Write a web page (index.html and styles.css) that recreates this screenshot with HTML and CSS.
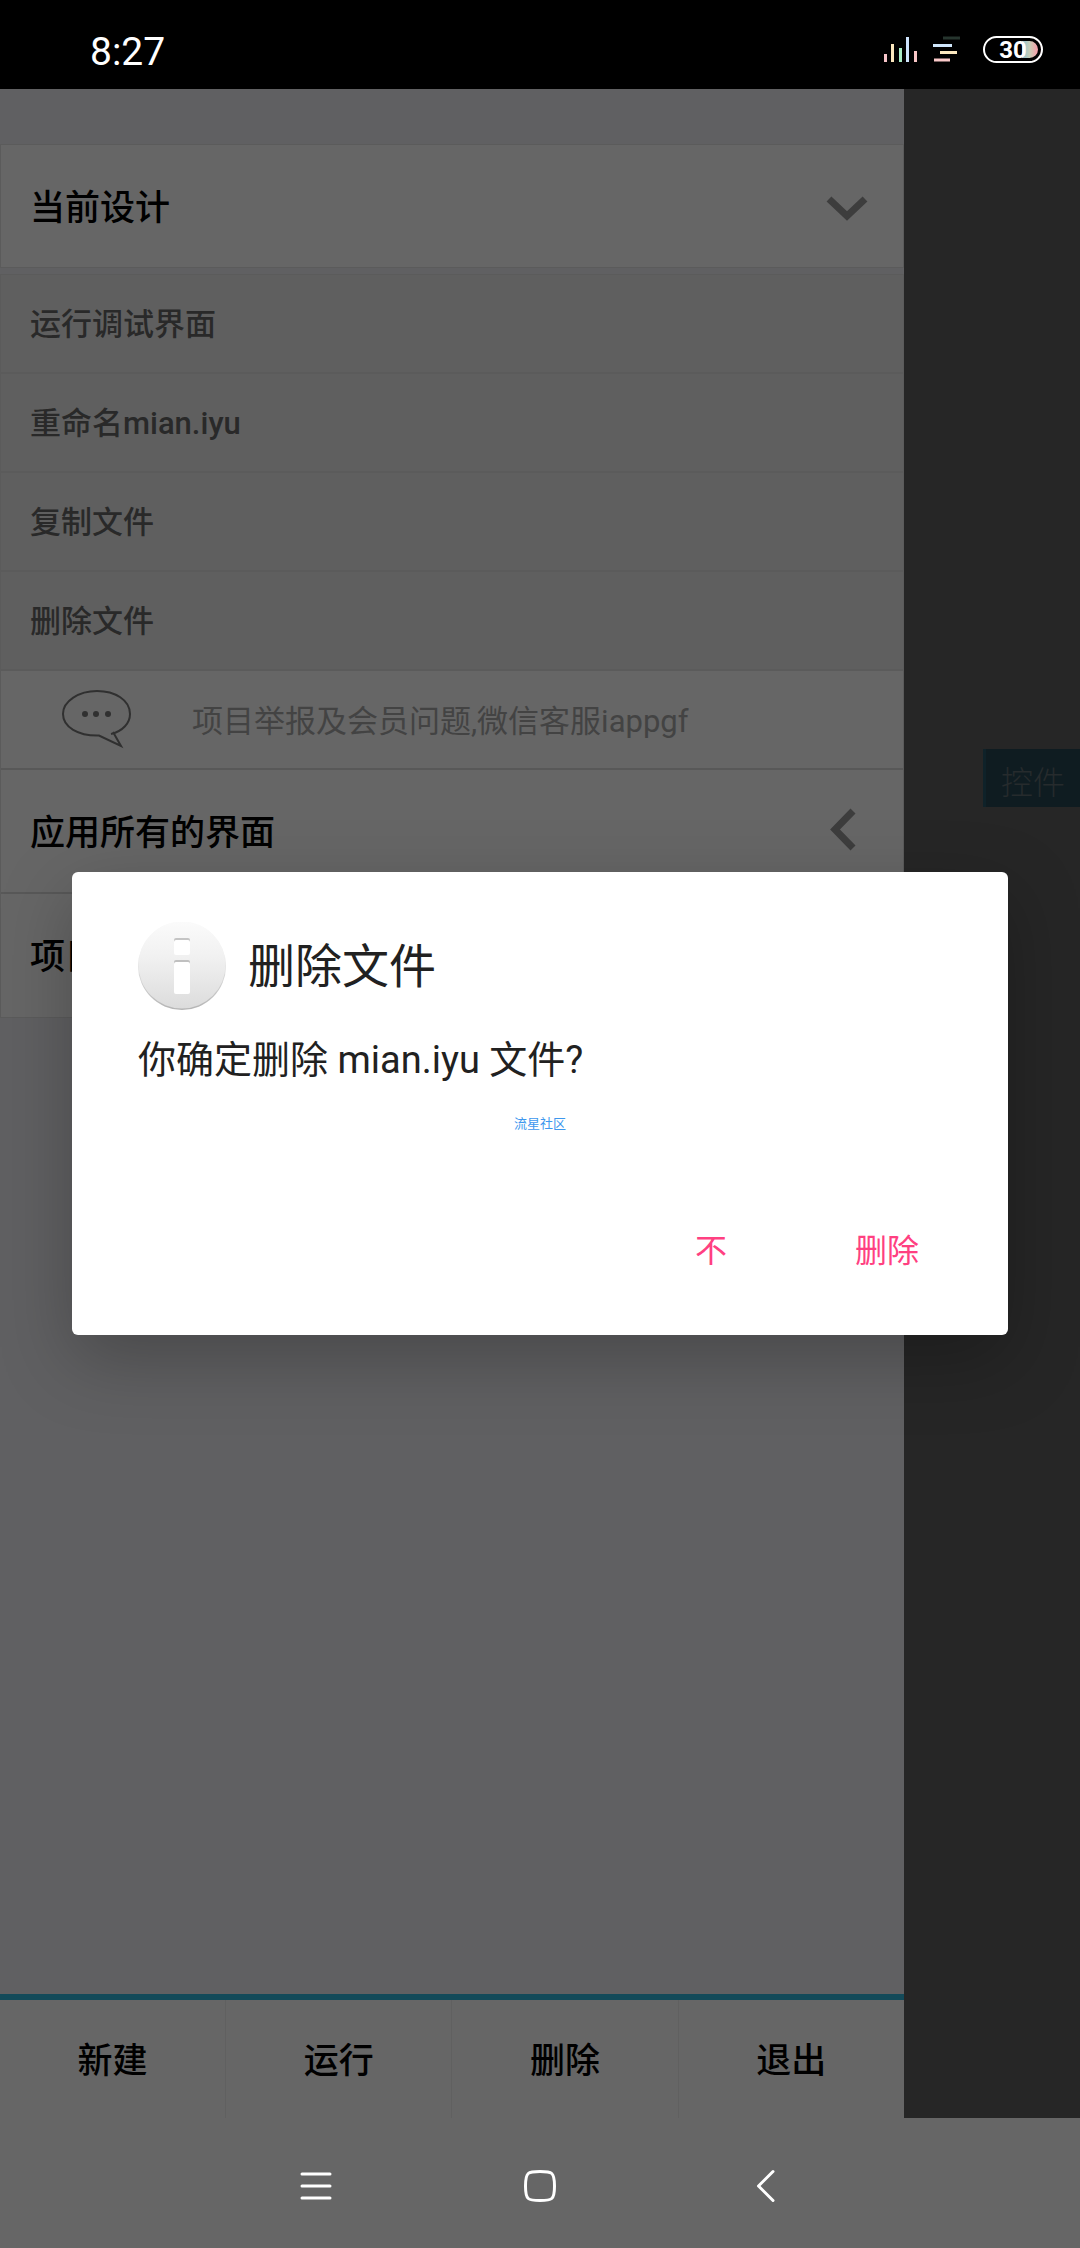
FILE: index.html
```html
<!DOCTYPE html>
<html lang="zh-CN">

<head>
    <meta charset="UTF-8">
    <meta name="viewport" content="width=device-width, initial-scale=1.0">
    <title>删除文件</title>
    <link rel="stylesheet" href="styles.css">
</head>

<body>
    <header class="status">
        <span class="time">8:27</span>
        <div class="status-icons">
            <svg width="34" height="28" viewBox="0 0 34 28">
                <rect x="1" y="18" width="3" height="8" fill="#f7c4c9" />
                <rect x="8" y="8" width="3" height="18" fill="#fbe7bd" />
                <rect x="16" y="12" width="3" height="14" fill="#a9ecc6" />
                <rect x="23" y="1" width="3" height="25" fill="#cfe4fd" />
                <rect x="31" y="15" width="3" height="11" fill="#f9c6c6" />
            </svg>
            <svg width="28" height="28" viewBox="0 0 28 28" stroke-width="3">
                <path d="M10 2h17" stroke="#26352e" />
                <path d="M0 9.500h19" stroke="#cfe6fb" />
                <path d="M7 16.500h17" stroke="#fbe8bf" />
                <path d="M1 24h16" stroke="#fac9c9" />
            </svg>
            <div class="battery">30</div>
        </div>
    </header>

    <main class="screen">
        <div class="drawer">
            <nav class="card">
                <button class="section">
                    当前设计
                    <svg width="44" height="44" viewBox="0 0 44 44">
                        <path d="M4 17l18 17 18-17" fill="none" stroke="#3d3d3d" stroke-width="7" />
                    </svg>
                </button>
            </nav>
            <nav class="card list">
                <button class="item">运行调试界面</button>
                <button class="item">重命名mian.iyu</button>
                <button class="item">复制文件</button>
                <button class="item">删除文件</button>
                <button class="contact">
                    <svg width="72" height="60" viewBox="0 0 72 60">
                        <path d="M50 45C62 42 69 34 69 25 69 11 54 2 36 2S2 12 2 25s15 22 36 21.500L60 57 52 43"
                            fill="none" stroke="#303030" stroke-width="2" />
                        <g fill="#303030">
                            <circle cx="24" cy="25" r="3" />
                            <circle cx="35" cy="25" r="3" />
                            <circle cx="47" cy="25" r="3" />
                        </g>
                    </svg>
                    项目举报及会员问题,微信客服iappgf
                </button>
                <button class="section">
                    应用所有的界面
                    <svg width="44" height="44" viewBox="0 0 44 44">
                        <path d="M28 4L10 22.500 28 41" fill="none" stroke="#3d3d3d" stroke-width="7" />
                    </svg>
                </button>
                <button class="section">项目</button>
            </nav>

            <div class="toolbar">
                <button>新建</button>
                <button>运行</button>
                <button>删除</button>
                <button>退出</button>
            </div>
        </div>

        <div class="stage">
            <button class="widgets">控件</button>
        </div>

        <div class="overlay">
            <div class="dialog" role="dialog" aria-labelledby="dialogTitle">
                <div class="dialog-head">
                    <svg width="88" height="88" viewBox="0 0 88 88">
                        <defs>
                            <linearGradient id="disc" x1="0" y1="0" x2="0" y2="1">
                                <stop offset="0" stop-color="#fbfbfb" />
                                <stop offset="0.4" stop-color="#f1f1f1" />
                                <stop offset="1" stop-color="#dcdcdc" />
                            </linearGradient>
                            <linearGradient id="rim" x1="0" y1="0" x2="0" y2="1">
                                <stop offset="0.3" stop-color="#f4f4f4" />
                                <stop offset="1" stop-color="#b4b4b4" />
                            </linearGradient>
                        </defs>
                        <circle cx="44" cy="44" r="44" fill="url(#rim)" />
                        <circle cx="44" cy="43" r="43.500" fill="url(#disc)" />
                        <rect x="36" y="16" width="16" height="8" rx="2" fill="#c4c4c4" />
                        <rect x="36" y="18" width="16" height="15" rx="2" fill="#fff" />
                        <rect x="36" y="38" width="16" height="8" rx="2" fill="#c0c0c0" />
                        <rect x="36" y="40" width="16" height="32" rx="2" fill="#fff" />
                    </svg>
                    <h1 id="dialogTitle">删除文件</h1>
                </div>
                <p class="message">你确定删除 mian.iyu 文件?</p>
                <p class="credit">流星社区</p>
                <div class="actions">
                    <button>不</button>
                    <button>删除</button>
                </div>
            </div>
        </div>
    </main>

    <footer class="navbar">
        <button aria-label="菜单">
            <svg width="36" height="36" viewBox="0 0 36 36">
                <path d="M6 6h28M6 18h28M6 30h28" />
            </svg>
        </button>
        <button aria-label="主页">
            <svg width="36" height="36" viewBox="0 0 36 36">
                <path d="M18 3.500C30 3.500 32.500 4 32.500 18S30 32.500 18 32.500 3.500 32 3.500 18 6 3.500 18 3.500z" />
            </svg>
        </button>
        <button aria-label="返回">
            <svg width="36" height="36" viewBox="0 0 36 36">
                <path d="M25 3.500L10.500 18 25 32.500" />
            </svg>
        </button>
    </footer>
</body>

</html>
```
FILE: styles.css
```css
* {
    box-sizing: border-box;
}

body {
    font-family: Roboto, "Noto Sans CJK SC", sans-serif;
    background-color: #666;
    margin: 0;
    min-height: 100vh;
    display: flex;
    flex-direction: column;
}

button {
    font-family: inherit;
    background: none;
    border: none;
    padding: 0;
    margin: 0;
    cursor: pointer;
}

svg {
    display: block;
    flex: none;
}

.status {
    height: 89px;
    padding: 14px 37px 0 90px;
    display: flex;
    align-items: center;
    justify-content: space-between;
    background-color: #000;
    color: #fff;
}

.time {
    font-size: 39px;
    line-height: 48px;
}

.status-icons {
    display: flex;
    align-items: center;
    gap: 20px;
    padding-bottom: 4px;
}

.status-icons svg:first-child {
    margin-right: -4px;
}

.battery {
    width: 60px;
    height: 27px;
    margin-left: 2px;
    border: 2px solid #fff;
    border-radius: 14px;
    background: linear-gradient(to right, #000 66%, #8fc4d4 67%, #c9cdb5 80%, #f2a3ab 92%) padding-box;
    box-shadow: inset 0 0 0 3px #000;
    font-size: 24px;
    font-weight: 700;
    line-height: 24px;
    text-align: center;
}

.screen {
    flex: 1;
    display: flex;
    position: relative;
}

.drawer {
    width: 83.7%;
    padding-top: 55px;
    display: flex;
    flex-direction: column;
    background-color: #606062;
}

.card {
    display: flex;
    flex-direction: column;
    background-color: #666;
    border: 1px solid #5b5b5b;
}

.list {
    margin-top: 6px;
}

.section {
    height: 122px;
    padding: 0 34px 4px 29px;
    display: flex;
    align-items: center;
    justify-content: space-between;
    font-size: 35px;
    font-weight: 500;
    color: #000;
}

.item {
    height: 99px;
    padding: 0 29px 4px;
    background-color: #5f5f5f;
    border-bottom: 2px solid #5b5b5b;
    font-size: 31px;
    font-weight: 500;
    text-align: left;
    color: #292929;
}

.contact {
    height: 99px;
    padding: 0 60px 2px;
    display: flex;
    align-items: center;
    gap: 59px;
    border-bottom: 2px solid #585858;
    font-size: 31px;
    color: #434343;
}

.list .section {
    height: 124px;
}

.list .section:not(:last-child) {
    border-bottom: 2px solid #585858;
}

.list .section:last-child {
    height: 123px;
}

.toolbar {
    margin-top: auto;
    height: 124px;
    display: flex;
    background-color: #666;
    border-top: 6px solid #134a59;
}

.toolbar button {
    flex: 1;
    padding-bottom: 4px;
    font-size: 35px;
    font-weight: 500;
    color: #000;
}

.toolbar button + button {
    border-left: 1px solid #606060;
}

.stage {
    flex: 1;
    display: flex;
    flex-direction: column;
    align-items: flex-end;
    padding-top: 660px;
    background-color: #262626;
}

.widgets {
    width: 97px;
    height: 58px;
    padding-top: 10px;
    background-color: #0f1c21;
    border-left: 3px solid #0f2229;
    font-size: 32px;
    font-weight: 300;
    line-height: 48px;
    color: #262b2d;
}

.overlay {
    position: absolute;
    inset: 0;
    display: flex;
    align-items: center;
    justify-content: center;
    padding: 0 72px;
}

.dialog {
    flex: 1;
    padding: 50px 33px 39px 66px;
    background-color: #fff;
    border-radius: 6px;
    box-shadow: 0 24px 72px rgba(0, 0, 0, 0.25);
    color: #212121;
}

.dialog-head {
    display: flex;
    align-items: center;
    gap: 22px;
}

.dialog h1 {
    margin: 0;
    padding-top: 2px;
    font-size: 47px;
    font-weight: 400;
    line-height: 60px;
}

.message {
    margin: 28px 0 0;
    font-size: 38px;
    line-height: 44px;
}

.credit {
    margin: 34px 33px 0 0;
    font-size: 13px;
    line-height: 16px;
    text-align: center;
    color: #3d97ee;
}

.actions {
    margin-top: 68px;
    display: flex;
    justify-content: flex-end;
}

.actions button {
    min-width: 176px;
    height: 96px;
    font-size: 32px;
    color: #ff4081;
}

.navbar {
    height: 130px;
    padding-top: 6px;
    display: flex;
    align-items: center;
    justify-content: center;
    gap: 190px;
    background-color: #666;
}

.navbar path {
    fill: none;
    stroke: #fff;
    stroke-width: 3;
    stroke-linecap: round;
    stroke-linejoin: round;
}
```
